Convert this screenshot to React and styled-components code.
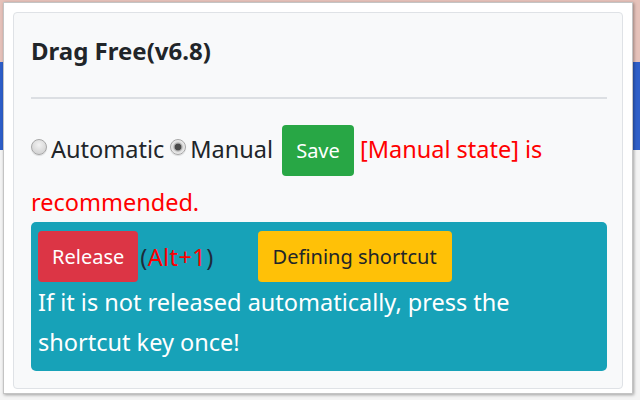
import React from "react";
import styled, { createGlobalStyle } from "styled-components";

const GlobalStyle = createGlobalStyle`
  html, body {
    margin: 0;
    padding: 0;
  }
  body {
    font-family: "Noto Sans", "Open Sans", sans-serif;
    background: linear-gradient(
      to bottom,
      #e6c2ba 0px,
      #e6c2ba 62px,
      #2f5fc9 62px,
      #2f5fc9 150px,
      #f4f4f4 150px
    );
    min-height: 400px;
  }
`;

const Backdrop = styled.div`
  padding: 2px 7px 7px 3px;
  box-sizing: border-box;
  height: 400px;
`;

const Popup = styled.div`
  background: #fff;
  border: 1px solid #c4c4c4;
  box-shadow: 1px 1px 3px rgba(0, 0, 0, 0.35);
  padding: 9px 9px 4px 9px;
`;

const Card = styled.div`
  background: #f8f9fa;
  border: 1px solid #dfe2e6;
  border-radius: 4px;
  padding: 17px 15px 17px 17px;
  color: #212529;
`;

const Title = styled.h5`
  margin: 6px 0 0;
  font-size: 24px;
  line-height: 30px;
  font-weight: 700;
`;

const Divider = styled.hr`
  margin: 31px 0 26px;
  border: 0;
  border-top: 2px solid #dcdfe3;
`;

const Options = styled.div`
  font-size: 23.5px;
  line-height: 40px;
`;

const Label = styled.label`
  display: inline;
  margin-left: ${(p) => (p.$first ? "0" : "6px")};
`;

const Radio = styled.span`
  display: inline-block;
  width: 16px;
  height: 16px;
  border-radius: 50%;
  box-sizing: border-box;
  border: 1px solid #a7a7a7;
  background: ${(p) =>
    p.$checked
      ? "radial-gradient(circle, #4a4a4a 0 3px, #9d9d9d 3.6px, #dcdcdc 5px, #ededed 7px)"
      : "radial-gradient(circle at 50% 35%, #f2f2f2 0, #d6d6d6 70%)"};
  box-shadow: 0 1px 1px rgba(0, 0, 0, 0.12);
  margin: 0 4px 3px 0;
  vertical-align: baseline;
`;

const Button = styled.span`
  display: inline-block;
  vertical-align: baseline;
  font-size: 20px;
  line-height: 30px;
  padding: 10.5px ${(p) => p.$px || 14}px;
  border-radius: 4px;
  background: ${(p) => p.$bg};
  color: ${(p) => p.$fg || "#fff"};
  margin: 0 ${(p) => p.$mr || 0}px ${(p) => p.$mb || 0}px ${(p) => p.$ml || 0}px;
`;

const Warn = styled.span`
  color: #ff0000;
`;

const InfoBox = styled.div`
  background: #17a2b8;
  border-radius: 5px;
  padding: 9px 7px 9px;
  color: #fff;
  font-size: 23.5px;
  line-height: 40px;
`;

const Shortcut = styled.span`
  color: #1d2b3a;
  margin-left: 2px;
  letter-spacing: 0.4px;
`;

const ButtonRow = styled.div`
  display: flex;
  align-items: center;
  line-height: 30px;
`;

export default function App() {
  return (
    <>
      <GlobalStyle />
      <Backdrop>
        <Popup>
          <Card>
            <Title>Drag Free(v6.8)</Title>
            <Divider />
            <Options>
              <Label $first>
                <Radio />
                Automatic
              </Label>
              <Label>
                <Radio $checked />
                Manual
              </Label>{" "}
              <Button $bg="#28a745" $mb={6} $ml={3}>
                Save
              </Button>{" "}
              <Warn>[Manual state] is</Warn> <Warn>recommended.</Warn>
            </Options>
            <InfoBox>
              <ButtonRow>
                <Button $bg="#dc3545">Release</Button>
                <Shortcut>
                  (<Warn>Alt+1</Warn>)
                </Shortcut>
                <Button $bg="#ffc107" $fg="#212529" $px={15} $ml={44}>
                  Defining shortcut
                </Button>
              </ButtonRow>
              If it is not released automatically, press the shortcut key once!
            </InfoBox>
          </Card>
        </Popup>
      </Backdrop>
    </>
  );
}
